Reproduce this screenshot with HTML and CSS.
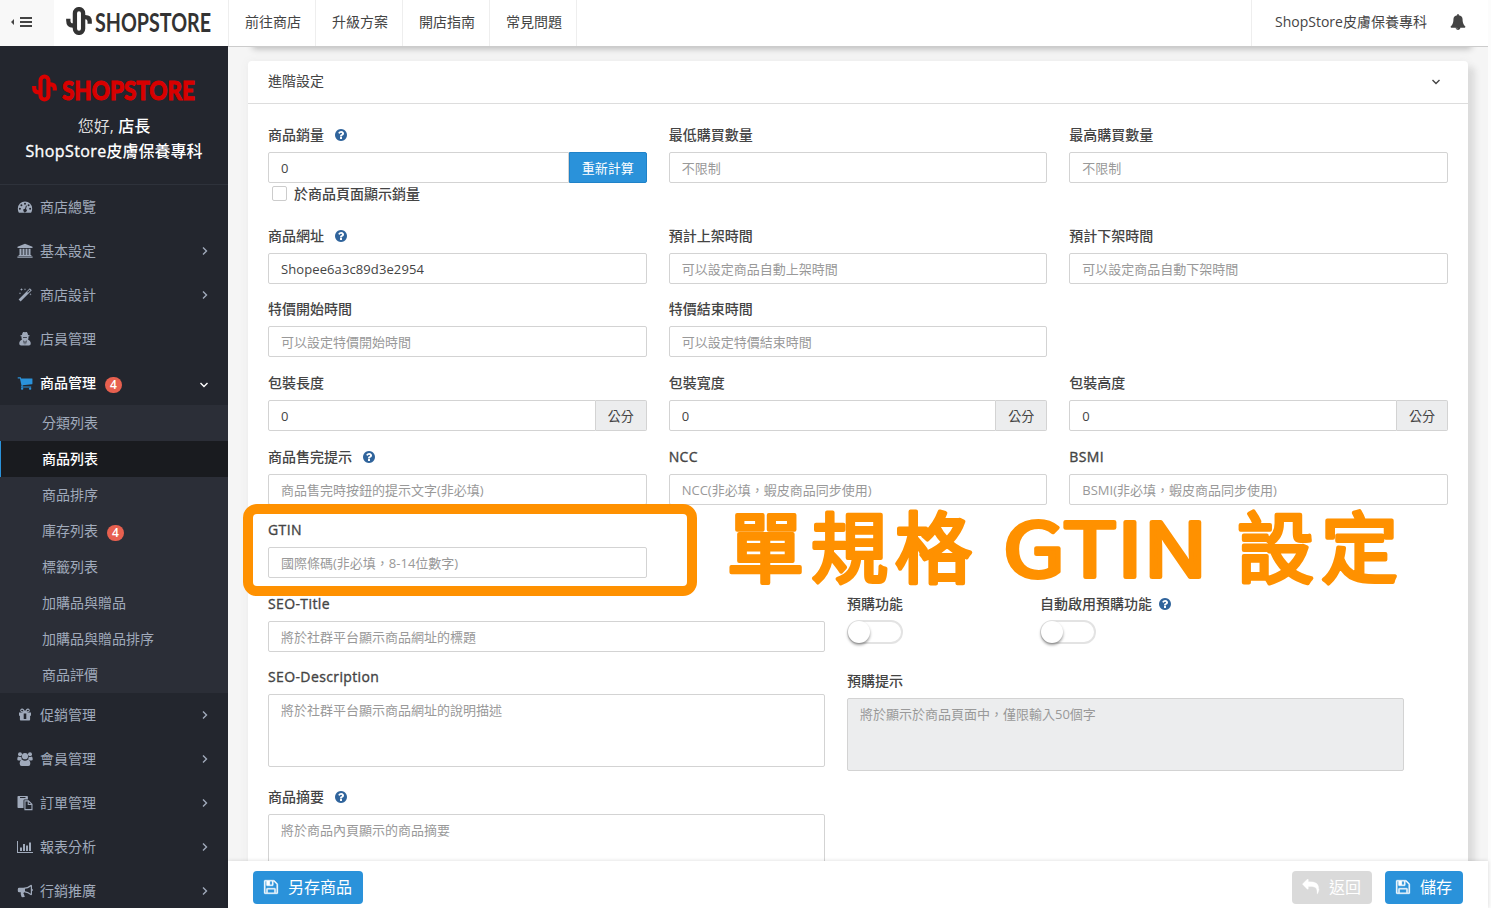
FILE: index.html
```html
<!DOCTYPE html>
<html lang="zh-Hant">
<head>
    <meta charset="utf-8">
    <title>ShopStore</title>
    <link rel="stylesheet" href="styles.css">
</head>
<body>
    <svg class="sprite" aria-hidden="true">
        <symbol id="mark" viewBox="0 0 28 28">
            <path d="M3.300 11.800v1.700q0 5 4.600 5h2.500" />
            <path d="M18 10.200h2.200q4.500 0 4.500 4.300v2.200" />
            <rect x="9.900" y="2.100" width="8.200" height="23.800" rx="4.100" />
        </symbol>
        <symbol id="gauge" viewBox="0 0 16 16">
            <path fill-rule="evenodd" d="M8 2.500a7.200 7.200 0 0 0-7.200 7.200q0 2.200 1.100 4h12.200q1.100-1.800 1.100-4A7.200 7.200 0 0 0 8 2.500zM8 3.700a1 1 0 1 1 0 2 1 1 0 0 1 0-2zM4.400 5.200a1 1 0 1 1 0 2 1 1 0 0 1 0-2zM2.900 8.800a1 1 0 1 1 0 2 1 1 0 0 1 0-2zM13.100 8.800a1 1 0 1 1 0 2 1 1 0 0 1 0-2zM11.600 5.200a1 1 0 1 1 0 2 1 1 0 0 1 0-2zM9 6.500l.9.300-.9 3.300a1.700 1.700 0 1 1-1-.3z" />
        </symbol>
        <symbol id="bank" viewBox="0 0 16 16">
            <path d="M8 .8l7.500 3v1.100H.5V3.800zM2.500 5.700h2v6.200h1V5.700h2v6.200h1V5.700h2v6.200h1V5.700h2v6.200h.9v1H1.600v-1h.9zM.4 13.500h15.200v1.300H.4z" />
        </symbol>
        <symbol id="magic" viewBox="0 0 16 16">
            <path fill-rule="evenodd" d="M12.800 1.200l2 2L3.600 14.400l-2-2zM12.800 2.500l-2.600 2.600.7.700 2.600-2.600z" />
            <path d="M4.500 1l.4 1.100L6 2.500l-1.100.4L4.500 4l-.4-1.100L3 2.500l1.100-.4zM8 1l.3.900.9.300-.9.300L8 3.400l-.3-.9-.9-.3.900-.3zM3 5l.3.900.9.300-.9.300L3 7.400l-.3-.9-.9-.3.900-.3zM13.500 6l.3.900.9.300-.9.300-.3.900-.3-.9-.9-.3.900-.3z" />
        </symbol>
        <symbol id="secret" viewBox="0 0 16 16">
            <path fill-rule="evenodd" d="M6.200 1q.900-.3 1.800.3.900-.6 1.800-.3 1 1 1.200 2.900 1.700.3 1.700.8t-1.300.9q.5 1.700-.4 2.800 2.600 1 2.800 3.600.1 2.600-1.900 2.600H4.100q-2 0-1.900-2.600.2-2.600 2.800-3.600-.9-1.100-.4-2.800-1.300-.4-1.300-.9t1.700-.8q.2-1.900 1.200-2.900zM6 5.900q.1 1 1 1t1-.6q.1.600 1 .6t1-1zM6.300 9.600l.8 4.200.5-2.900-.5-1.100zM9.700 9.600l-.8.200-.5 1.100.5 2.900z" />
        </symbol>
        <symbol id="cart" viewBox="0 0 1792 1792">
            <path d="M704 1536q0 52-38 90t-90 38-90-38-38-90 38-90 90-38 90 38 38 90zm896 0q0 52-38 90t-90 38-90-38-38-90 38-90 90-38 90 38 38 90zm128-1088v512q0 24-16.500 42.500t-40.500 21.500l-1044 122q13 60 13 70 0 16-24 64h920q26 0 45 19t19 45-19 45-45 19h-1024q-26 0-45-19t-19-45q0-11 8-31.500t16-36 21.500-40 15.500-29.500l-177-823h-204q-26 0-45-19t-19-45 19-45 45-19h256q16 0 28.500 6.500t19.500 15.500 13 24.500 8 26 5.500 29.500 4.500 26h1201q26 0 45 19t19 45z" />
        </symbol>
        <symbol id="gift" viewBox="0 0 16 16">
            <path fill-rule="evenodd" d="M2 5.400h4.200L5 5.300a1.900 1.900 0 1 1 1.700-3L8 4l1.300-1.700a1.900 1.900 0 1 1 1.700 3l-1.200.100H14v3.300h-.9v4q0 .8-.8.8H3.700q-.8 0-.8-.8v-4H2zM5 2.700a.8.800 0 1 0 0 1.600h1.600L5.700 3zM11 2.700l-.7.300-.9 1.300H11a.8.800 0 1 0 0-1.600zM6.700 6.500v5.400h2.600V6.500z" />
        </symbol>
        <symbol id="users" viewBox="0 0 16 16">
            <circle cx="3" cy="3.200" r="2" />
            <circle cx="13" cy="3.200" r="2" />
            <circle cx="8" cy="5.200" r="3.100" />
            <path d="M.3 8.500Q.3 5.400 1.700 5.400q1.400 1 2.600.3 0 1.800 1 2.900-1.300 0-2.100 1H1.600Q.3 9.600.3 8.500zM15.700 8.500q0-3.100-1.400-3.100-1.400 1-2.600.3 0 1.800-1 2.900 1.300 0 2.100 1h1.600q1.300 0 1.300-1.100zM5.200 8.700q2.800 2 5.600 0 2.500.300 2.500 4 0 2.300-2 2.300H4.700q-2 0-2-2.300 0-3.700 2.500-4z" />
        </symbol>
        <symbol id="paste" viewBox="0 0 16 16">
            <path fill-rule="evenodd" d="M1.300 1h8.800q.8 0 .8.800v2.600H7.500q-1 0-1 1V13H1.300q-.8 0-.8-.8V1.800q0-.8.800-.8zM3 1.900v1.200h5.500V1.900zM7.400 5.300h4.300l3.800 3.800v6.100H7.400zM8.500 6.400v7.700h5.900v-4H10.700V6.400zM11.800 6.900V9h2.100z" />
        </symbol>
        <symbol id="chart" viewBox="0 0 16 16">
            <path d="M0 2h1v11h15v1H0zM3 8.500h2V12H3zM6 5h2v7H6zM9 6.500h2V12H9zM12 3.500h2V12h-2z" />
        </symbol>
        <symbol id="horn" viewBox="0 0 16 16">
            <path fill-rule="evenodd" d="M14 1.800q1 0 1 1v3q.9.300.9 1.200T15 8.200v3.100q0 1-1 1-3.300-2.700-6.700-3-.8.400-.8 1.100 0 .5.600.9-.5.900.9 1.900-.7 1.300-3.400.9Q3.300 10.700 3.800 9.300H2.200Q.8 9.300.8 7.900V6.200q0-1.400 1.400-1.400h4.200q4 0 7.600-3zM13.800 3.400Q11 5.500 8 5.800v2.500q3 .3 5.800 2.400z" />
        </symbol>
        <symbol id="bell" viewBox="0 0 1792 1792">
            <path d="M912 1696q0-16-16-16-59 0-101.500-42.500t-42.500-101.500q0-16-16-16t-16 16q0 73 51.500 124.500t124.500 51.500q16 0 16-16zm816-288q0 52-38 90t-90 38h-448q0 106-75 181t-181 75-181-75-75-181h-448q-52 0-90-38t-38-90q50-42 91-88t85-119.500 74.500-158.500 50-206 19.500-260q0-152 117-282.500t307-158.500q-8-19-8-39 0-40 28-68t68-28 68 28 28 68q0 20-8 39 190 28 307 158.500t117 282.500q0 139 19.500 260t50 206 74.500 158.500 85 119.500 91 88z" />
        </symbol>
        <symbol id="help" viewBox="0 0 1792 1792">
            <path d="M1024 1376v-192q0-14-9-23t-23-9h-192q-14 0-23 9t-9 23v192q0 14 9 23t23 9h192q14 0 23-9t9-23zm256-672q0-88-55.500-163t-138.500-116-170-41q-243 0-371 213-15 24 8 42l132 100q7 6 19 6 16 0 25-12 53-68 86-92 34-24 86-24 48 0 85.500 26t37.500 59q0 38-20 61t-68 45q-63 28-115.500 86.500t-52.500 125.500v36q0 14 9 23t23 9h192q14 0 23-9t9-23q0-19 21.500-49.500t54.500-49.500q32-18 49-28.500t46-35 44.500-48 28-60.500 12.500-81zm384 192q0 209-103 385.500t-279.500 279.500-385.500 103-385.500-103-279.500-279.500-103-385.500 103-385.500 279.500-279.500 385.500-103 385.500 103 279.500 279.500 103 385.500z" />
        </symbol>
        <symbol id="save" viewBox="0 0 1792 1792">
            <path d="M512 1536h768v-384h-768v384zm896 0h128v-896q0-14-10-38.500t-20-34.500l-281-281q-10-10-34-20t-39-10v416q0 40-28 68t-68 28h-576q-40 0-68-28t-28-68v-416h-128v1280h128v-416q0-40 28-68t68-28h832q40 0 68 28t28 68v416zm-384-928v-320q0-13-9.500-22.500t-22.500-9.500h-192q-13 0-22.500 9.500t-9.500 22.500v320q0 13 9.500 22.500t22.500 9.500h192q13 0 22.500-9.500t9.500-22.500zm640 32v928q0 40-28 68t-68 28h-1344q-40 0-68-28t-28-68v-1344q0-40 28-68t68-28h928q40 0 88 20t76 48l280 280q28 28 48 76t20 88z" />
        </symbol>
        <symbol id="reply" viewBox="0 0 1792 1792">
            <path d="M1792 1120q0 166-127 451-3 7-10.500 24t-13.500 30-13 22q-12 17-28 17-15 0-23.500-10t-8.500-25q0-9 2.500-26.500t2.500-23.500q5-68 5-123 0-112-19.500-200.500t-54-153.500-89.500-112-115-77.500-143.500-48.500-161-24.500-180.500-6.500h-224v256q0 26-19 45t-45 19-45-19l-512-512q-19-19-19-45t19-45l512-512q19-19 45-19t45 19 19 45v256h224q713 0 875 403 53 134 53 333z" />
        </symbol>
        <symbol id="angle" viewBox="0 0 8 10">
            <path d="M2 1.500L5.500 5 2 8.500" />
        </symbol>
        <symbol id="angle-down" viewBox="0 0 10 8">
            <path d="M1.500 2L5 5.500 8.500 2" />
        </symbol>
    </svg>

    <header class="topbar">
        <div class="menu-toggle">
            <svg width="22" height="12" viewBox="0 0 22 12"><path d="M3 3v6L0 6zM9 1h12v2H9zM9 5h12v2H9zM9 9h12v2H9z" /></svg>
        </div>
        <div class="brand">
            <svg class="mark" width="28" height="28"><use href="#mark" /></svg>
            <svg class="wordmark" width="118" height="28"><text x="1" y="25" textLength="116" lengthAdjust="spacingAndGlyphs">SHOPSTORE</text></svg>
        </div>
        <nav class="topnav">
            <a>前往商店</a>
            <a>升級方案</a>
            <a>開店指南</a>
            <a>常見問題</a>
        </nav>
        <div class="account">
            <span>ShopStore皮膚保養專科</span>
            <svg width="16" height="16"><use href="#bell" /></svg>
        </div>
    </header>

    <div class="layout">
        <aside class="sidebar">
            <div class="profile">
                <div class="profile-logo">
                    <svg class="mark" width="27" height="28"><use href="#mark" /></svg>
                    <svg class="wordmark heavy" width="136" height="28"><text x="1" y="26" textLength="133" lengthAdjust="spacingAndGlyphs">SHOPSTORE</text></svg>
                </div>
                <p>您好, <b>店長</b></p>
                <p><b><span class="latin">ShopStore</span>皮膚保養專科</b></p>
            </div>
            <ul class="menu">
                <li><svg class="icon"><use href="#gauge" /></svg>商店總覽</li>
                <li><svg class="icon"><use href="#bank" /></svg>基本設定<svg class="angle"><use href="#angle" /></svg></li>
                <li><svg class="icon"><use href="#magic" /></svg>商店設計<svg class="angle"><use href="#angle" /></svg></li>
                <li><svg class="icon"><use href="#secret" /></svg>店員管理</li>
                <li class="open"><svg class="icon"><use href="#cart" /></svg>商品管理<span class="badge">4</span><svg class="angle down"><use href="#angle-down" /></svg></li>
            </ul>
            <ul class="submenu">
                <li>分類列表</li>
                <li class="active">商品列表</li>
                <li>商品排序</li>
                <li>庫存列表<span class="badge">4</span></li>
                <li>標籤列表</li>
                <li>加購品與贈品</li>
                <li>加購品與贈品排序</li>
                <li>商品評價</li>
            </ul>
            <ul class="menu">
                <li><svg class="icon"><use href="#gift" /></svg>促銷管理<svg class="angle"><use href="#angle" /></svg></li>
                <li><svg class="icon"><use href="#users" /></svg>會員管理<svg class="angle"><use href="#angle" /></svg></li>
                <li><svg class="icon"><use href="#paste" /></svg>訂單管理<svg class="angle"><use href="#angle" /></svg></li>
                <li><svg class="icon"><use href="#chart" /></svg>報表分析<svg class="angle"><use href="#angle" /></svg></li>
                <li><svg class="icon"><use href="#horn" /></svg>行銷推廣<svg class="angle"><use href="#angle" /></svg></li>
            </ul>
        </aside>

        <main class="main">
            <div class="content">
                <section class="panel panel-prev"></section>
                <section class="panel">
                    <div class="panel-head">
                        <span>進階設定</span>
                        <svg width="10" height="8"><use href="#angle-down" /></svg>
                    </div>
                    <div class="panel-body">
                        <div class="row row-sales">
                            <div class="field">
                                <label>商品銷量<svg class="help"><use href="#help" /></svg></label>
                                <div class="group"><input type="text" value="0"><button class="recalc">重新計算</button></div>
                                <div class="check"><span class="box"></span>於商品頁面顯示銷量</div>
                            </div>
                            <div class="field"><label>最低購買數量</label><input type="text" placeholder="不限制"></div>
                            <div class="field"><label>最高購買數量</label><input type="text" placeholder="不限制"></div>
                        </div>
                        <div class="row">
                            <div class="field"><label>商品網址<svg class="help"><use href="#help" /></svg></label><input type="text" value="Shopee6a3c89d3e2954"></div>
                            <div class="field"><label>預計上架時間</label><input type="text" placeholder="可以設定商品自動上架時間"></div>
                            <div class="field"><label>預計下架時間</label><input type="text" placeholder="可以設定商品自動下架時間"></div>
                        </div>
                        <div class="row">
                            <div class="field"><label>特價開始時間</label><input type="text" placeholder="可以設定特價開始時間"></div>
                            <div class="field"><label>特價結束時間</label><input type="text" placeholder="可以設定特價結束時間"></div>
                        </div>
                        <div class="row">
                            <div class="field"><label>包裝長度</label><div class="group"><input type="text" value="0"><span class="addon">公分</span></div></div>
                            <div class="field"><label>包裝寬度</label><div class="group"><input type="text" value="0"><span class="addon">公分</span></div></div>
                            <div class="field"><label>包裝高度</label><div class="group"><input type="text" value="0"><span class="addon">公分</span></div></div>
                        </div>
                        <div class="row">
                            <div class="field"><label>商品售完提示<svg class="help"><use href="#help" /></svg></label><input type="text" placeholder="商品售完時按鈕的提示文字(非必填)"></div>
                            <div class="field"><label class="latin">NCC</label><input type="text" placeholder="NCC(非必填，蝦皮商品同步使用)"></div>
                            <div class="field"><label class="latin">BSMI</label><input type="text" placeholder="BSMI(非必填，蝦皮商品同步使用)"></div>
                        </div>
                        <div class="row">
                            <div class="field"><label class="latin">GTIN</label><input type="text" placeholder="國際條碼(非必填，8-14位數字)"></div>
                        </div>
                        <div class="halves">
                            <div class="half">
                                <div class="field seo-title"><label class="latin">SEO-Title</label><input type="text" placeholder="將於社群平台顯示商品網址的標題"></div>
                                <div class="field seo-desc"><label class="latin">SEO-Description</label><textarea placeholder="將於社群平台顯示商品網址的說明描述"></textarea></div>
                                <div class="field"><label>商品摘要<svg class="help"><use href="#help" /></svg></label><textarea placeholder="將於商品內頁顯示的商品摘要"></textarea></div>
                            </div>
                            <div class="half">
                                <div class="switches">
                                    <div class="field"><label>預購功能</label><span class="switch"></span></div>
                                    <div class="field"><label>自動啟用預購功能<svg class="help near"><use href="#help" /></svg></label><span class="switch"></span></div>
                                </div>
                                <div class="field"><label>預購提示</label><textarea class="disabled" placeholder="將於顯示於商品頁面中，僅限輸入50個字"></textarea></div>
                            </div>
                        </div>
                    </div>
                </section>
            </div>
            <footer class="actions">
                <button class="btn"><svg><use href="#save" /></svg>另存商品</button>
                <span class="spacer"></span>
                <button class="btn back"><svg><use href="#reply" /></svg>返回</button>
                <button class="btn"><svg><use href="#save" /></svg>儲存</button>
            </footer>
        </main>
    </div>

    <!-- callout over the GTIN field -->
    <div class="callout-box"></div>
    <svg class="callout-text" width="700" height="100">
        <text x="5" y="73" textLength="245">單規格</text>
        <text class="wide" x="281" y="73" textLength="205" lengthAdjust="spacingAndGlyphs">GTIN</text>
        <text x="515" y="73" textLength="161">設定</text>
    </svg>
</body>
</html>
```

FILE: styles.css
```css
* {
    box-sizing: border-box;
}
body {
    margin: 0;
    width: 1491px;
    height: 908px;
    overflow: hidden;
    position: relative;
    background: #fcfcfc;
    color: #444;
    font-family: "Open Sans", "Noto Sans CJK TC", sans-serif;
    font-size: 14px;
    line-height: 20px;
}
ul, p {
    margin: 0;
    padding: 0;
    list-style: none;
}
svg {
    fill: currentColor;
    flex: none;
}
.sprite {
    position: absolute;
    width: 0;
    height: 0;
}
#angle path, #angle-down path {
    fill: none;
    stroke: currentColor;
    stroke-width: 1.4;
}
#mark path, #mark rect {
    fill: none;
    stroke: currentColor;
    stroke-width: 4.3;
}
/* latin text is a bit heavier than regular in labels */
.latin {
    letter-spacing: 0.38px;
    -webkit-text-stroke: 0.35px currentColor;
}

/* top bar */
.topbar {
    display: flex;
    width: 1488px;
    height: 46px;
    background: #fff;
}
.menu-toggle {
    display: flex;
    width: 54px;
    padding: 16px 0 0 11px;
    background: #f8f8f8;
}
.brand {
    display: flex;
    width: 174px;
    padding: 7px 0 0 11px;
    color: #333;
}
.wordmark {
    margin-left: 1px;
    overflow: visible;
    font-family: Lato, sans-serif;
    font-weight: bold;
    font-size: 26px;
}
.wordmark.heavy {
    margin-left: 3px;
    font-weight: 900;
    stroke: currentColor;
    stroke-width: 1;
}
.topnav {
    display: flex;
    border-left: 1px solid #eee;
}
.topnav a {
    width: 87px;
    padding: 12px 0 0 16px;
    border-right: 1px solid #eee;
}
.account {
    display: flex;
    margin-left: auto;
    width: 237px;
    padding: 12px 0 0 23px;
    border-left: 1px solid #eee;
}
.account span {
    width: 175px;
    white-space: nowrap;
}
.account svg {
    margin-top: 2px;
}

.layout {
    display: flex;
    height: 862px;
}

/* sidebar */
.sidebar {
    width: 228px;
    overflow: hidden;
    background: #23262e;
    color: #a0aabb;
}
.profile {
    height: 139px;
    padding-top: 28px;
    border-bottom: 1px solid #2e323b;
    text-align: center;
    font-size: 16px;
    line-height: 25px;
    color: #ddd;
}
.profile-logo {
    display: flex;
    padding-left: 31px;
    height: 40px;
    color: #d80000;
}
.profile b {
    color: #fff;
    font-weight: 500;
}
.menu li {
    display: flex;
    align-items: center;
    height: 44px;
    padding: 0 19px 0 17px;
}
.icon {
    width: 16px;
    height: 16px;
    margin-right: 7px;
}
.angle {
    width: 8px;
    height: 10px;
    margin-left: auto;
}
.angle.down {
    width: 10px;
    height: 8px;
    margin-top: 3px;
}
.menu .open {
    color: #fff;
    font-weight: 500;
}
.open .icon {
    color: #2a92da;
}
.badge {
    width: 17px;
    height: 16px;
    margin: 3px 0 0 9px;
    border-radius: 8px;
    background: #e7604f;
    color: #fff;
    text-align: center;
    font-size: 12px;
    font-weight: 600;
    line-height: 16px;
}
.submenu {
    background: #2b2e37;
}
.submenu li {
    display: flex;
    align-items: center;
    height: 36px;
    padding-left: 42px;
}
.submenu .active {
    padding-left: 41px;
    border-left: 1px solid #2a92da;
    background: #191b1f;
    color: #fff;
    font-weight: 500;
}

/* content */
.main {
    display: flex;
    flex-direction: column;
    width: 1260px;
    background: #f5f5f5;
}
.content {
    height: 815px;
    padding: 0 20px;
    overflow: hidden;
    border-top: 1px solid #ccc;
}
.panel {
    height: 900px;
    border-radius: 4px;
    background: #fff;
    box-shadow: 7px 6px 6px #dcdcdc, 0 0 8px #ebebeb;
}
.panel-prev {
    height: 20px;
    margin: -20px 0 14px;
    box-shadow: 4px 2px 6px #bbb;
}
.panel-head {
    display: flex;
    justify-content: space-between;
    align-items: center;
    height: 43px;
    padding: 0 27px 2px 20px;
    border-bottom: 1px solid #ddd;
}
.panel-head svg {
    margin-top: 2px;
}
.panel-body {
    padding: 21px 20px 0;
}
.row {
    display: grid;
    grid-template-columns: repeat(3, 1fr);
    gap: 22px;
    height: 73.6px;
}
.row-sales {
    height: 100.8px;
}
label {
    display: flex;
    align-items: center;
    height: 20px;
    margin-bottom: 7px;
    font-weight: 500;
}
.help {
    width: 14px;
    height: 14px;
    margin-left: 10px;
    color: #30649c;
}
.help.near {
    margin-left: 6px;
}
input, textarea {
    display: block;
    width: 100%;
    height: 31px;
    margin: 0;
    padding: 1px 12px 0;
    border: 1px solid #d3d3d3;
    border-radius: 2px;
    outline: none;
    background: #fff;
    color: #444;
    font: inherit;
    font-size: 13px;
    letter-spacing: 0.1px;
}
::placeholder {
    color: #999;
    opacity: 1;
    letter-spacing: 0;
}
textarea {
    height: 73px;
    padding-top: 5px;
    resize: none;
}
textarea.disabled {
    background: #ecedee;
}
.group {
    display: flex;
}
.group input {
    flex: 1;
    border-radius: 2px 0 0 2px;
}
.recalc, .addon {
    height: 31px;
    border: 1px solid #d3d3d3;
    border-left: 0;
    border-radius: 0 2px 2px 0;
    background: #ecedee;
    font: inherit;
    font-size: 13px;
    line-height: 30px;
    text-align: center;
}
.addon {
    width: 51px;
}
.recalc {
    width: 78px;
    padding: 0;
    border: 1px solid #1f82c8;
    background: #2a92da;
    color: #fff;
}
.check {
    display: flex;
    align-items: center;
    height: 21px;
    padding-left: 4px;
    font-weight: 500;
}
.box {
    width: 15px;
    height: 15px;
    margin-right: 7px;
    border: 1px solid #ccc;
    border-radius: 2px;
}
.halves {
    display: flex;
    gap: 22px;
}
.half {
    width: 557px;
}
.seo-title {
    height: 73.6px;
}
.seo-desc {
    height: 119.6px;
}
.switches {
    display: flex;
    height: 77px;
}
.switches .field {
    width: 193px;
}
.switches label {
    margin-bottom: 6px;
}
.switch {
    display: block;
    width: 56px;
    height: 24px;
    border: 2px solid #e3e3e3;
    border-radius: 12px;
}
.switch::before {
    content: "";
    display: block;
    width: 22px;
    height: 22px;
    margin: -1px 0 0 -1px;
    border-radius: 50%;
    background: #fff;
    box-shadow: 0 2px 3px rgba(0, 0, 0, 0.4);
}

/* bottom bar */
.actions {
    display: flex;
    gap: 13px;
    height: 47px;
    padding: 10px 25px 0;
    background: #fff;
    box-shadow: 0 0 4px rgba(0, 0, 0, 0.15);
}
.spacer {
    flex: 1;
}
.btn {
    display: flex;
    align-items: center;
    height: 33px;
    padding: 0 11px 1px 10px;
    border: 0;
    border-radius: 4px;
    background: #2a92da;
    color: #fff;
    font: inherit;
    font-size: 16px;
}
.btn svg {
    width: 16px;
    height: 16px;
    margin-right: 9px;
    stroke: currentColor;
    stroke-width: 40;
}
.btn.back {
    background: #dadada;
}
.btn.back svg {
    width: 18px;
}

/* callout */
.callout-box {
    position: absolute;
    left: 243px;
    top: 504px;
    width: 454px;
    height: 92px;
    border: 10px solid #ff9100;
    border-radius: 14px;
}
.callout-text {
    position: absolute;
    left: 722px;
    top: 504px;
    overflow: visible;
    color: #ff9100;
    font-family: "Noto Sans CJK TC", sans-serif;
    font-size: 77px;
    stroke: #ff9100;
    stroke-width: 4;
    stroke-linejoin: round;
}
.callout-text .wide {
    font-size: 75px;
}
```
